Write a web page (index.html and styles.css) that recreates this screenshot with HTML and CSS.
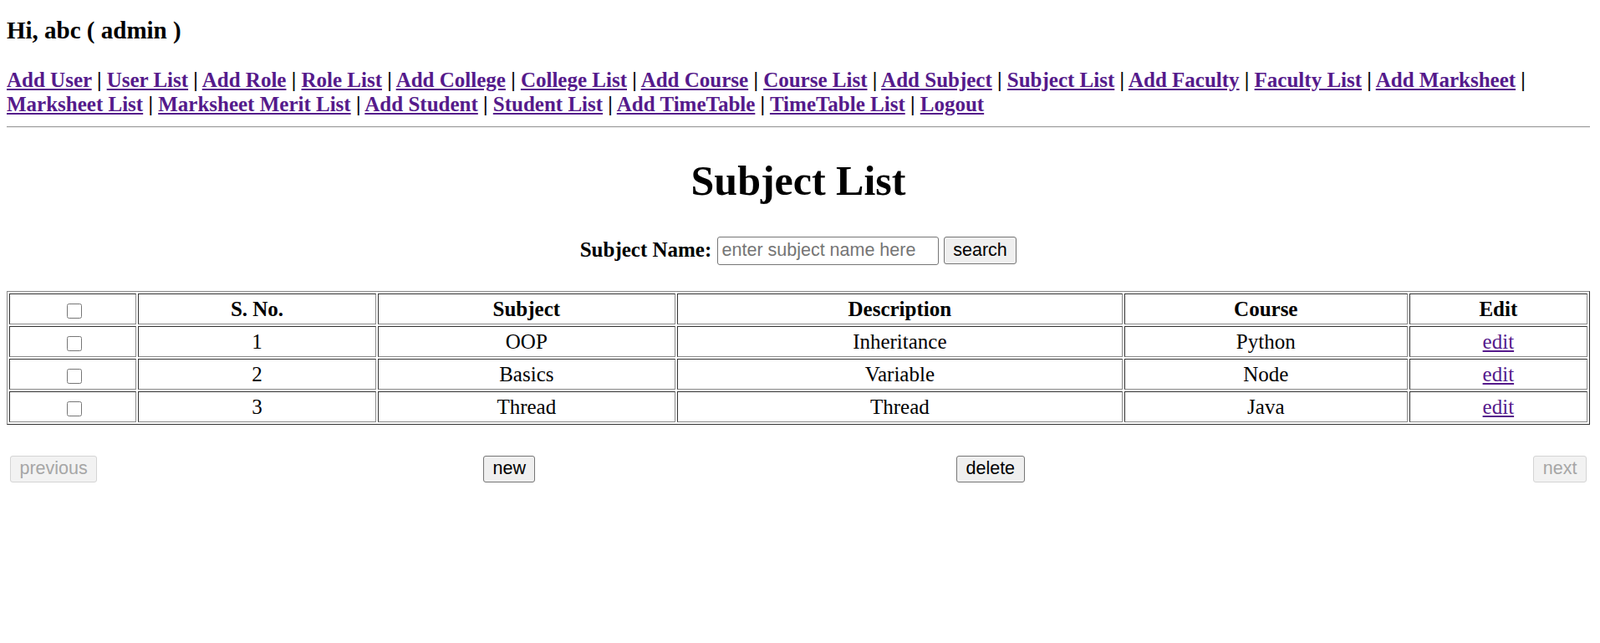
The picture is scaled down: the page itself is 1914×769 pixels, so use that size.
FILE: index.html
```html
<!DOCTYPE html>
<html>
<head>
<meta charset="utf-8">
<title>Subject List</title>
<link rel="stylesheet" href="styles.css">
</head>
<body>
<h3 class="greeting">Hi, abc ( admin )</h3>
<div class="menu"><a href="#">Add User</a> | <a href="#">User List</a> | <a href="#">Add Role</a> | <a href="#">Role List</a> | <a href="#">Add College</a> | <a href="#">College List</a> | <a href="#">Add Course</a> | <a href="#">Course List</a> | <a href="#">Add Subject</a> | <a href="#">Subject List</a> | <a href="#">Add Faculty</a> | <a href="#">Faculty List</a> | <a href="#">Add Marksheet</a> | <a href="#">Marksheet List</a> | <a href="#">Marksheet Merit List</a> | <a href="#">Add Student</a> | <a href="#">Student List</a> | <a href="#">Add TimeTable</a> | <a href="#">TimeTable List</a> | <a href="#">Logout</a></div>
<hr class="rule">
<h1 class="title">Subject List</h1>
<form class="search"><label class="search-label">Subject Name:</label> <input class="search-input" type="text" placeholder="enter subject name here"> <button class="btn btn-search" type="button">search</button></form>
<table class="grid">
<tr><th class="c-check"><input class="check" type="checkbox"></th><th>S. No.</th><th>Subject</th><th>Description</th><th>Course</th><th>Edit</th></tr>
<tr><td class="c-check"><input class="check" type="checkbox"></td><td>1</td><td>OOP</td><td>Inheritance</td><td>Python</td><td><a class="edit-link" href="#">edit</a></td></tr>
<tr><td class="c-check"><input class="check" type="checkbox"></td><td>2</td><td>Basics</td><td>Variable</td><td>Node</td><td><a class="edit-link" href="#">edit</a></td></tr>
<tr><td class="c-check"><input class="check" type="checkbox"></td><td>3</td><td>Thread</td><td>Thread</td><td>Java</td><td><a class="edit-link" href="#">edit</a></td></tr>
</table>
<div class="pager">
<button class="btn" type="button" disabled>previous</button>
<button class="btn" type="button">new</button>
<button class="btn" type="button">delete</button>
<button class="btn pager-next" type="button" disabled>next</button>
</div>
</body>
</html>
```
FILE: styles.css
```css
body {
  margin: 8px 12px 8px 8px;
  font-family: "Liberation Serif", "Times New Roman", serif;
  font-size: 25px;
  color: #000;
  background: #fff;
}

.greeting {
  font-size: 29px;
  font-weight: bold;
  margin: 11.5px 0 28px;
}

.menu {
  font-weight: bold;
  line-height: 29px;
}

.menu a,
.edit-link {
  color: #551a8b;
  text-decoration: underline;
}

.rule {
  margin: 12px 0 0;
  height: 0;
  border: 0;
  border-top: 1px solid #9a9a9a;
  border-bottom: 1px solid #eeeeee;
}

.title {
  font-size: 50px;
  font-weight: bold;
  text-align: center;
  margin: 34px 0 0;
}

.search {
  margin: 38px 0 0;
  text-align: center;
}

.search-label {
  font-weight: bold;
}

.search-input {
  box-sizing: border-box;
  width: 265px;
  height: 34px;
  padding: 0 5px;
  border: 1px solid #767676;
  border-radius: 3px;
  font: 21.5px "Liberation Sans", Arial, sans-serif;
  color: #000;
  background: #fff;
}

.search-input::placeholder {
  color: #757575;
}

.btn {
  box-sizing: border-box;
  height: 32px;
  padding: 0 10.5px;
  border: 1px solid #767676;
  border-radius: 3px;
  background: #efefef;
  color: #000;
  font: 21.5px "Liberation Sans", Arial, sans-serif;
}

.btn-search {
  height: 33px;
}

.btn:disabled {
  color: #a6a6a6;
  background: #f2f2f2;
  border-color: #d4d4d4;
}

.grid {
  width: 100%;
  margin-top: 31px;
  border-style: solid;
  border-width: 1px;
  border-color: #8a8a8a #333 #333 #8a8a8a;
  border-spacing: 2px;
  font-size: 25px;
}

.grid th,
.grid td {
  border-style: solid;
  border-width: 1px;
  border-color: #333 #8a8a8a #8a8a8a #333;
  padding: 3px 2px;
  line-height: 29px;
  text-align: center;
}

.check {
  width: 18px;
  height: 18px;
  margin: 2px 5px 2px 8px;
  vertical-align: middle;
}

.pager {
  display: grid;
  grid-template-columns: 3fr 3fr 2fr 2fr;
  column-gap: 2px;
  align-items: start;
  justify-items: start;
  padding: 0 4px;
  margin-top: 37px;
}

.pager-next {
  justify-self: end;
}
```
